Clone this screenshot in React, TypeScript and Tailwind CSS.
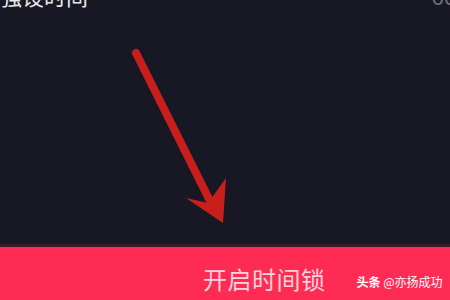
export default function App() {
  return (
    <div
      className="relative flex h-[300px] w-[450px] flex-col overflow-hidden bg-[#171823]"
      style={{ fontFamily: '"Noto Sans CJK SC", "Noto Sans", sans-serif' }}
    >
      <div className="flex-1">
        <div className="-mt-[19px] flex items-start justify-between">
          <span className="text-[22px] leading-[28px] text-white/90">强设时间</span>
          <span className="-mr-[6px] text-[22px] leading-[28px] text-white/40">60</span>
        </div>
      </div>

      {/* red annotation arrow drawn over the screenshot */}
      <svg
        className="absolute left-0 top-0"
        width="450"
        height="300"
        viewBox="0 0 450 300"
      >
        <line
          x1="136"
          y1="53"
          x2="213"
          y2="207"
          stroke="#c91f1c"
          strokeWidth="8"
          strokeLinecap="round"
        />
        <polygon points="223,223 186,198 208,203 226,178" fill="#c91f1c" />
      </svg>

      <div className="h-[3px] bg-[#3a1a25]" />
      <div className="flex h-[53px] items-center bg-[#fe2c55] pl-[203px]">
        <span className="mt-[10px] text-[24px] leading-none tracking-[0.5px] text-[#fbd3da]">
          开启时间锁
        </span>
        <span className="ml-[31px] mt-[16px] text-[12px] leading-none text-white">
          <span className="font-bold">头条</span> @亦扬成功
        </span>
      </div>
    </div>
  );
}
